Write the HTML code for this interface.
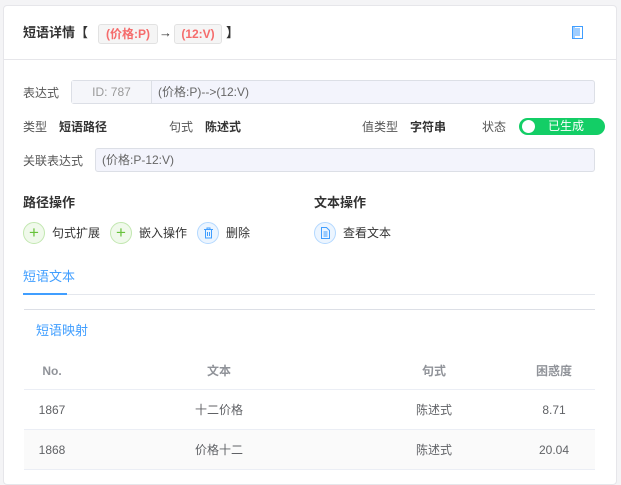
<!DOCTYPE html>
<html><head><meta charset="utf-8"><style>
*{box-sizing:border-box;margin:0;padding:0}
body{width:621px;height:472px;overflow:hidden;background:#f4f4f6;font-family:"Liberation Sans","Noto Sans CJK SC",sans-serif;font-size:12px;color:#555;line-height:16px}
.card{position:absolute;left:3px;top:5px;width:614px;height:480px;background:#fff;border:1px solid #e6e6ea;border-radius:4px}
.a{position:absolute;white-space:nowrap;line-height:16px}
.tag{position:absolute;top:18px;height:20px;border:1px solid #e2e2e2;background:#f5f5f5;border-radius:3px;color:#f56c6c;font-size:12px;line-height:18px;text-align:center;font-weight:bold}
.b{font-weight:bold;color:#333}
.inp{position:absolute;height:24px;border:1px solid #dcdfe6;border-radius:3px;background:#f3f4fc;line-height:22px;color:#666}
.circ{position:absolute;top:216px;width:22px;height:22px;border-radius:50%}
.g{background:#f0f9eb;border:1px solid #c2e7b0;color:#67c23a;text-align:center;line-height:19px;font-size:17px}
.bl{background:#ecf5ff;border:1px solid #b3d8ff}
.hl{position:absolute;left:20px;width:571px;height:1px;background:#ebeef5}
.th{position:absolute;top:357px;color:#909399;font-weight:bold;text-align:center;line-height:16px}
.td{position:absolute;color:#606266;text-align:center;line-height:16px}
</style></head><body>
<div class="card">
<div class="a b" style="left:19px;top:19px;font-size:13px">短语详情【</div>
<div class="tag" style="left:94px;width:60px">(价格:P)</div>
<div class="a" style="left:155px;top:19px;font-size:13px;color:#333;font-weight:bold">→</div>
<div class="tag" style="left:170px;width:48px">(12:V)</div>
<div class="a b" style="left:222px;top:19px;font-size:13px">】</div>
<svg class="a" style="left:568px;top:20px" width="11" height="13" viewBox="0 0 11 13"><rect x="0.5" y="0.5" width="10" height="12" fill="#fff" stroke="#409eff"/><path d="M3 3h5M3 5h5M3 7h5M3 9h5M2 1v11" stroke="#409eff"/></svg>
<div style="position:absolute;left:0;top:53px;width:612px;height:1px;background:#e6e6ea"></div>

<div class="a" style="left:19px;top:79px">表达式</div>
<div class="inp" style="left:67px;top:74px;width:524px"><span style="display:inline-block;width:80px;text-align:center;background:#f5f6fa;border-right:1px solid #dcdfe6;color:#999">ID: 787</span><span style="padding-left:6px">(价格:P)--&gt;(12:V)</span></div>

<div class="a" style="left:19px;top:113px">类型</div><div class="a b" style="left:55px;top:113px">短语路径</div>
<div class="a" style="left:165px;top:113px">句式</div><div class="a b" style="left:201px;top:113px">陈述式</div>
<div class="a" style="left:358px;top:113px">值类型</div><div class="a b" style="left:406px;top:113px">字符串</div>
<div class="a" style="left:478px;top:113px">状态</div>
<div class="a" style="left:515px;top:112px;width:86px;height:17px;border-radius:9px;background:#13ce66;color:#fff;line-height:17px;padding-left:29px">已生成<span style="position:absolute;left:3px;top:2px;width:13px;height:13px;border-radius:50%;background:#fff"></span></div>

<div class="a" style="left:19px;top:147px">关联表达式</div>
<div class="inp" style="left:91px;top:142px;width:500px;padding-left:6px">(价格:P-12:V)</div>

<div class="a b" style="left:19px;top:189px;font-size:13px">路径操作</div>
<div class="a b" style="left:310px;top:189px;font-size:13px">文本操作</div>
<div class="circ g" style="left:19px">+</div><div class="a" style="left:48px;top:219px;color:#333">句式扩展</div>
<div class="circ g" style="left:106px">+</div><div class="a" style="left:135px;top:219px;color:#333">嵌入操作</div>
<div class="circ bl" style="left:193px"><svg style="position:absolute;left:5px;top:4px" width="11" height="12"><path d="M1 2.5h9M4 2.5v-1.5h3v1.5M2.5 3v8h6v-8M4.5 5v4M6.5 5v4" stroke="#409eff" fill="none"/></svg></div><div class="a" style="left:222px;top:219px;color:#333">删除</div>
<div class="circ bl" style="left:310px"><svg style="position:absolute;left:5px;top:4px" width="11" height="12"><path d="M1.5 0.5h5l3 3v8h-8z M3.5 5h4M3.5 7h4M3.5 9h4" stroke="#409eff" fill="none"/></svg></div><div class="a" style="left:339px;top:219px;color:#333">查看文本</div>

<div class="a" style="left:19px;top:263px;color:#409eff;font-size:13px">短语文本</div>
<div class="hl" style="top:288px;background:#e4e7ed"></div>
<div style="position:absolute;left:19px;top:287px;width:44px;height:2px;background:#409eff"></div>
<div class="hl" style="top:303px;background:#dcdfe6"></div>
<div class="a" style="left:32px;top:317px;color:#409eff;font-size:13px">短语映射</div>

<div class="th" style="left:20px;width:56px">No.</div>
<div class="th" style="left:170px;width:90px">文本</div>
<div class="th" style="left:390px;width:80px">句式</div>
<div class="th" style="left:510px;width:80px">困惑度</div>
<div class="hl" style="top:383px"></div>
<div class="td" style="left:20px;width:56px;top:396px">1867</div>
<div class="td" style="left:170px;width:90px;top:396px">十二价格</div>
<div class="td" style="left:390px;width:80px;top:396px">陈述式</div>
<div class="td" style="left:510px;width:80px;top:396px">8.71</div>
<div style="position:absolute;left:20px;top:424px;width:571px;height:40px;background:#fafafa"></div>
<div class="hl" style="top:423px"></div>
<div class="td" style="left:20px;width:56px;top:436px">1868</div>
<div class="td" style="left:170px;width:90px;top:436px">价格十二</div>
<div class="td" style="left:390px;width:80px;top:436px">陈述式</div>
<div class="td" style="left:510px;width:80px;top:436px">20.04</div>
<div class="hl" style="top:463px"></div>
</div>
</body></html>
